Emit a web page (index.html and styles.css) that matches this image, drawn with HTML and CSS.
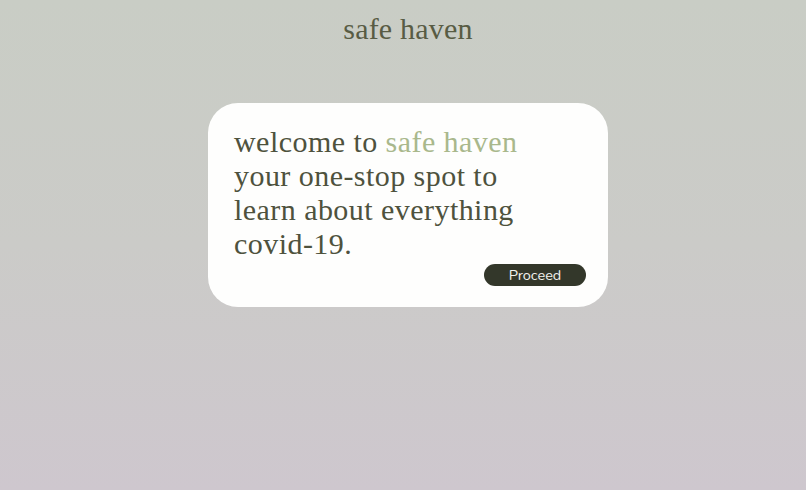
FILE: index.html
```html
<!DOCTYPE html>
<html>
<head>
<meta charset="utf-8">
<link rel="stylesheet" href="styles.css">
</head>
<body>
<div class="page">
  <h1 class="title">safe haven</h1>
  <div class="card">
    <p class="intro">welcome to <span class="accent">safe haven</span><br>your one-stop spot to<br>learn about everything<br>covid-19.</p>
    <div class="actions"><button class="btn">Proceed</button></div>
  </div>
</div>
</body>
</html>
```
FILE: styles.css
```css
html, body {
  margin: 0;
  padding: 0;
  height: 100%;
}
body {
  background: linear-gradient(to bottom, #c9cdc5 0%, #cbcbc8 50%, #cec7ce 100%);
  font-family: "Liberation Serif", "DejaVu Serif", serif;
}
.page {
  display: flex;
  flex-direction: column;
  align-items: center;
  padding-left: 10px;
}
.title {
  margin: 12px 0 0 0;
  font-weight: normal;
  font-size: 30px;
  line-height: 34px;
  color: #585c44;
  letter-spacing: 0.2px;
}
.card {
  margin-top: 57px;
  width: 400px;
  height: 204px;
  box-sizing: border-box;
  background: #fefefd;
  border-radius: 30px;
  padding: 22px 22px 0 26px;
  display: flex;
  flex-direction: column;
}
.intro {
  margin: 0;
  font-size: 30px;
  line-height: 34px;
  letter-spacing: 0.45px;
  color: #4e523d;
}
.accent {
  color: #a9b88c;
}
.actions {
  display: flex;
  justify-content: flex-end;
  margin-top: 3px;
}
.btn {
  width: 102px;
  height: 22px;
  border: none;
  border-radius: 11px;
  background: #33372a;
  color: #f2f2ee;
  font-family: "Nunito", "Noto Sans", "Open Sans", sans-serif;
  font-size: 14.5px;
  padding: 0;
}
```
